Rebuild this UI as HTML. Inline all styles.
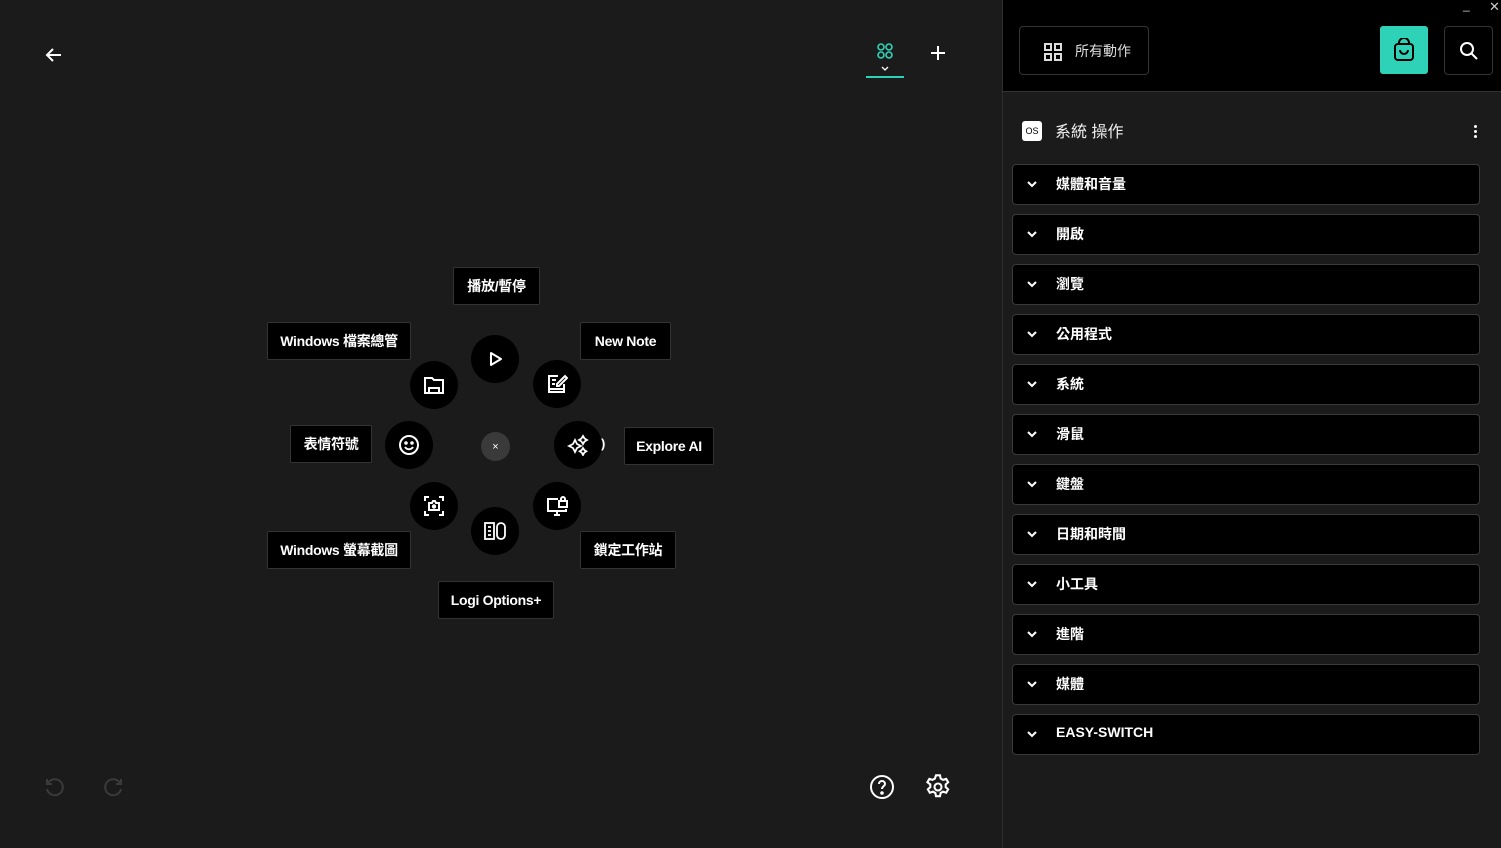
<!DOCTYPE html>
<html><head><meta charset="utf-8"><style>
*{box-sizing:border-box;margin:0;padding:0}
body{width:1501px;height:848px;background:#1b1b1b;font-family:"Liberation Sans","Noto Sans CJK TC",sans-serif;color:#fff;position:relative;overflow:hidden}
.a{position:absolute}
.lbl{position:absolute;background:#000;border:1px solid #333;font-weight:bold;font-size:14px;display:flex;align-items:center;justify-content:center;height:38px;border-radius:2px;letter-spacing:-0.3px}
.c{position:absolute;width:48px;height:48px;border-radius:50%;background:#000;display:flex;align-items:center;justify-content:center}
.row{position:absolute;left:1012px;width:468px;height:41px;background:#000;border:1px solid #3a3a3a;border-radius:4px;font-size:14px;font-weight:bold}
.row svg{position:absolute;left:13px;top:14px}
.row span{position:absolute;left:43px;top:9px}
</style></head><body>
<svg class="a" style="left:44px;top:46px" width="20" height="18" viewBox="0 0 20 18"><path d="M17 9H3M9 3L3 9l6 6" stroke="#fff" stroke-width="2" fill="none"/></svg>
<svg class="a" style="left:876px;top:42px" width="18" height="18" viewBox="0 0 18 18" fill="none" stroke="#2ed3b7" stroke-width="1.6"><circle cx="5" cy="5" r="3"/><circle cx="13" cy="5" r="3"/><circle cx="5" cy="13" r="3"/><circle cx="13" cy="13" r="3"/></svg>
<svg class="a" style="left:881px;top:66px" width="8" height="6"><path d="M1 1l3 3 3-3" stroke="#fff" stroke-width="1.3" fill="none"/></svg>
<div class="a" style="left:866px;top:76px;width:38px;height:2px;background:#2ed3b7"></div>
<svg class="a" style="left:930px;top:45px" width="16" height="16"><path d="M8 1v14M1 8h14" stroke="#fff" stroke-width="2"/></svg>

<div class="lbl" style="left:453px;top:267px;width:87px">播放/暫停</div>
<div class="lbl" style="left:267px;top:322px;width:144px">Windows 檔案總管</div>
<div class="lbl" style="left:580px;top:322px;width:91px">New Note</div>
<div class="lbl" style="left:290px;top:425px;width:82px">表情符號</div>
<div class="lbl" style="left:624px;top:427px;width:90px">Explore AI</div>
<div class="lbl" style="left:267px;top:531px;width:144px">Windows 螢幕截圖</div>
<div class="lbl" style="left:580px;top:531px;width:96px">鎖定工作站</div>
<div class="lbl" style="left:438px;top:581px;width:116px">Logi Options+</div>

<div class="a" style="left:601px;top:436px;font-size:13px;font-weight:bold">)</div>
<div class="c" style="left:471px;top:335px"><svg width="20" height="20" viewBox="0 0 20 20"><path d="M6 4l10 6-10 6z" stroke="#fff" stroke-width="2" fill="none" stroke-linejoin="round"/></svg></div>
<div class="c" style="left:410px;top:361px"><svg width="22" height="20" viewBox="0 0 22 20" fill="none" stroke="#fff" stroke-width="2"><path d="M2 3h7l2 2h9v13H2z"/><path d="M6 18v-5h10v5"/></svg></div>
<div class="c" style="left:533px;top:360px"><svg width="22" height="22" viewBox="0 0 22 22" fill="none" stroke="#fff" stroke-width="2"><path d="M12 3H3v16h15v-8"/><path d="M6 7h4M6 11h3M3 16h15"/><path d="M11 11l8-8 2 2-8 8h-2z"/></svg></div>
<div class="c" style="left:385px;top:421px"><svg width="22" height="22" viewBox="0 0 22 22" fill="none" stroke="#fff" stroke-width="2"><circle cx="11" cy="11" r="9"/><path d="M7 13c2 3 6 3 8 0"/><circle cx="8" cy="9" r=".8" fill="#fff"/><circle cx="14" cy="9" r=".8" fill="#fff"/></svg></div>
<div class="a" style="left:481px;top:432px;width:29px;height:29px;border-radius:50%;background:#3a3a3a;font-size:11px;display:flex;align-items:center;justify-content:center">×</div>
<div class="c" style="left:554px;top:421px"><svg width="22" height="22" viewBox="0 0 22 22" fill="none" stroke="#fff" stroke-width="1.8"><path d="M8 6l2 4 4 2-4 2-2 4-2-4-4-2 4-2z"/><path d="M16 2l1.5 2.5L20 6l-2.5 1.5L16 10l-1.5-2.5L12 6l2.5-1.5z"/><path d="M16 14l1.3 2 2 1.3-2 1.3L16 21l-1.3-2.4-2-1.3 2-1.3z"/></svg></div>
<div class="c" style="left:410px;top:482px"><svg width="22" height="22" viewBox="0 0 22 22" fill="none" stroke="#fff" stroke-width="2"><path d="M2 6V2h4M16 2h4v4M2 16v4h4M20 16v4h-4"/><path d="M6 8h3l1-2h2l1 2h3v7H6z"/><circle cx="11" cy="11.5" r="1.2" fill="#fff"/></svg></div>
<div class="c" style="left:533px;top:482px"><svg width="22" height="22" viewBox="0 0 22 22" fill="none" stroke="#fff" stroke-width="2"><path d="M12 4H2v12h18v-2"/><path d="M8 20h6M11 16v4"/><rect x="13" y="6" width="8" height="6"/><path d="M15 6V4a2 2 0 014 0v2"/></svg></div>
<div class="c" style="left:471px;top:507px"><svg width="24" height="22" viewBox="0 0 24 22" fill="none" stroke="#fff" stroke-width="1.8"><rect x="2" y="3" width="9" height="16"/><path d="M5 7h3M5 11h3M5 15h3"/><rect x="14" y="3" width="8" height="16" rx="4"/></svg></div>

<svg class="a" style="left:43px;top:776px" width="22" height="22" viewBox="0 0 22 22" fill="none" stroke="#3a3a3a" stroke-width="2"><path d="M5 7a8 8 0 11-1 6"/><path d="M4 3v5h5"/></svg>
<svg class="a" style="left:103px;top:776px" width="22" height="22" viewBox="0 0 22 22" fill="none" stroke="#3a3a3a" stroke-width="2"><path d="M17 7a8 8 0 101 6"/><path d="M18 3v5h-5"/></svg>
<svg class="a" style="left:869px;top:774px" width="26" height="26" viewBox="0 0 26 26" fill="none" stroke="#fff" stroke-width="2"><circle cx="13" cy="13" r="11"/><path d="M10 10a3 3 0 116 0c0 2-3 2.5-3 5"/><circle cx="13" cy="19" r=".8" fill="#fff"/></svg>
<svg class="a" style="left:924px;top:773px" width="28" height="28" viewBox="0 0 24 24" fill="none" stroke="#fff" stroke-width="1.8"><circle cx="12" cy="12" r="3"/><path d="M10.3 2h3.4l.6 2.8 2 1.1 2.7-.9 1.7 2.9-2.1 1.9v2.3l2.1 1.9-1.7 2.9-2.7-.9-2 1.1-.6 2.8h-3.4l-.6-2.8-2-1.1-2.7.9-1.7-2.9 2.1-1.9v-2.3L2.9 7.9l1.7-2.9 2.7.9 2-1.1z"/></svg>

<div class="a" style="left:1002px;top:0;width:499px;height:848px;background:#1b1b1b;border-left:1px solid #2e2e2e"></div>
<div class="a" style="left:1003px;top:0;width:498px;height:92px;background:#000;border-bottom:1px solid #333"></div>
<div class="a" style="left:1463px;top:-2px;font-size:12px;color:#ccc">_</div>
<div class="a" style="left:1489px;top:-1px;font-size:13px;color:#ccc">✕</div>
<div class="a" style="left:1019px;top:26px;width:130px;height:49px;border:1px solid #333;border-radius:4px;font-size:14px;color:#ddd">
<svg class="a" style="left:23px;top:15px" width="20" height="20" viewBox="0 0 20 20" fill="none" stroke="#ddd" stroke-width="2"><rect x="2" y="2" width="6" height="6"/><rect x="12" y="2" width="6" height="6"/><rect x="2" y="12" width="6" height="6"/><rect x="12" y="12" width="6" height="6"/></svg>
<span class="a" style="left:55px;top:14px">所有動作</span></div>
<div class="a" style="left:1380px;top:26px;width:48px;height:48px;background:#2ed3b7;border-radius:3px"><svg class="a" style="left:13px;top:12px" width="22" height="24" viewBox="0 0 22 24" fill="none" stroke="#000" stroke-width="2"><rect x="2" y="6" width="18" height="16" rx="3"/><path d="M6 6V5a5 5 0 0110 0v1"/><path d="M7 12a4 4 0 008 0"/></svg></div>
<div class="a" style="left:1444px;top:26px;width:49px;height:49px;border:1px solid #333;border-radius:4px"><svg class="a" style="left:14px;top:14px" width="20" height="20" viewBox="0 0 20 20" fill="none" stroke="#fff" stroke-width="2"><circle cx="8" cy="8" r="6"/><path d="M12.5 12.5L18 18"/></svg></div>

<div class="a" style="left:1022px;top:121px;width:20px;height:20px;background:#fff;border-radius:3px;color:#000;font-size:9px;display:flex;align-items:center;justify-content:center">OS</div>
<div class="a" style="left:1055px;top:118px;font-size:16px;color:#eee">系統 操作</div>
<div class="a" style="left:1474px;top:125px;width:3px;height:3px;background:#fff;border-radius:50%;box-shadow:0 5px 0 #fff,0 10px 0 #fff"></div>

<div class="row" style="top:164px"><svg width="12" height="10"><path d="M2 3l4 4 4-4" stroke="#fff" stroke-width="2" fill="none"/></svg><span>媒體和音量</span></div>
<div class="row" style="top:214px"><svg width="12" height="10"><path d="M2 3l4 4 4-4" stroke="#fff" stroke-width="2" fill="none"/></svg><span>開啟</span></div>
<div class="row" style="top:264px"><svg width="12" height="10"><path d="M2 3l4 4 4-4" stroke="#fff" stroke-width="2" fill="none"/></svg><span>瀏覽</span></div>
<div class="row" style="top:314px"><svg width="12" height="10"><path d="M2 3l4 4 4-4" stroke="#fff" stroke-width="2" fill="none"/></svg><span>公用程式</span></div>
<div class="row" style="top:364px"><svg width="12" height="10"><path d="M2 3l4 4 4-4" stroke="#fff" stroke-width="2" fill="none"/></svg><span>系統</span></div>
<div class="row" style="top:414px"><svg width="12" height="10"><path d="M2 3l4 4 4-4" stroke="#fff" stroke-width="2" fill="none"/></svg><span>滑鼠</span></div>
<div class="row" style="top:464px"><svg width="12" height="10"><path d="M2 3l4 4 4-4" stroke="#fff" stroke-width="2" fill="none"/></svg><span>鍵盤</span></div>
<div class="row" style="top:514px"><svg width="12" height="10"><path d="M2 3l4 4 4-4" stroke="#fff" stroke-width="2" fill="none"/></svg><span>日期和時間</span></div>
<div class="row" style="top:564px"><svg width="12" height="10"><path d="M2 3l4 4 4-4" stroke="#fff" stroke-width="2" fill="none"/></svg><span>小工具</span></div>
<div class="row" style="top:614px"><svg width="12" height="10"><path d="M2 3l4 4 4-4" stroke="#fff" stroke-width="2" fill="none"/></svg><span>進階</span></div>
<div class="row" style="top:664px"><svg width="12" height="10"><path d="M2 3l4 4 4-4" stroke="#fff" stroke-width="2" fill="none"/></svg><span>媒體</span></div>
<div class="row" style="top:714px"><svg width="12" height="10"><path d="M2 3l4 4 4-4" stroke="#fff" stroke-width="2" fill="none"/></svg><span>EASY-SWITCH</span></div>
</body></html>
